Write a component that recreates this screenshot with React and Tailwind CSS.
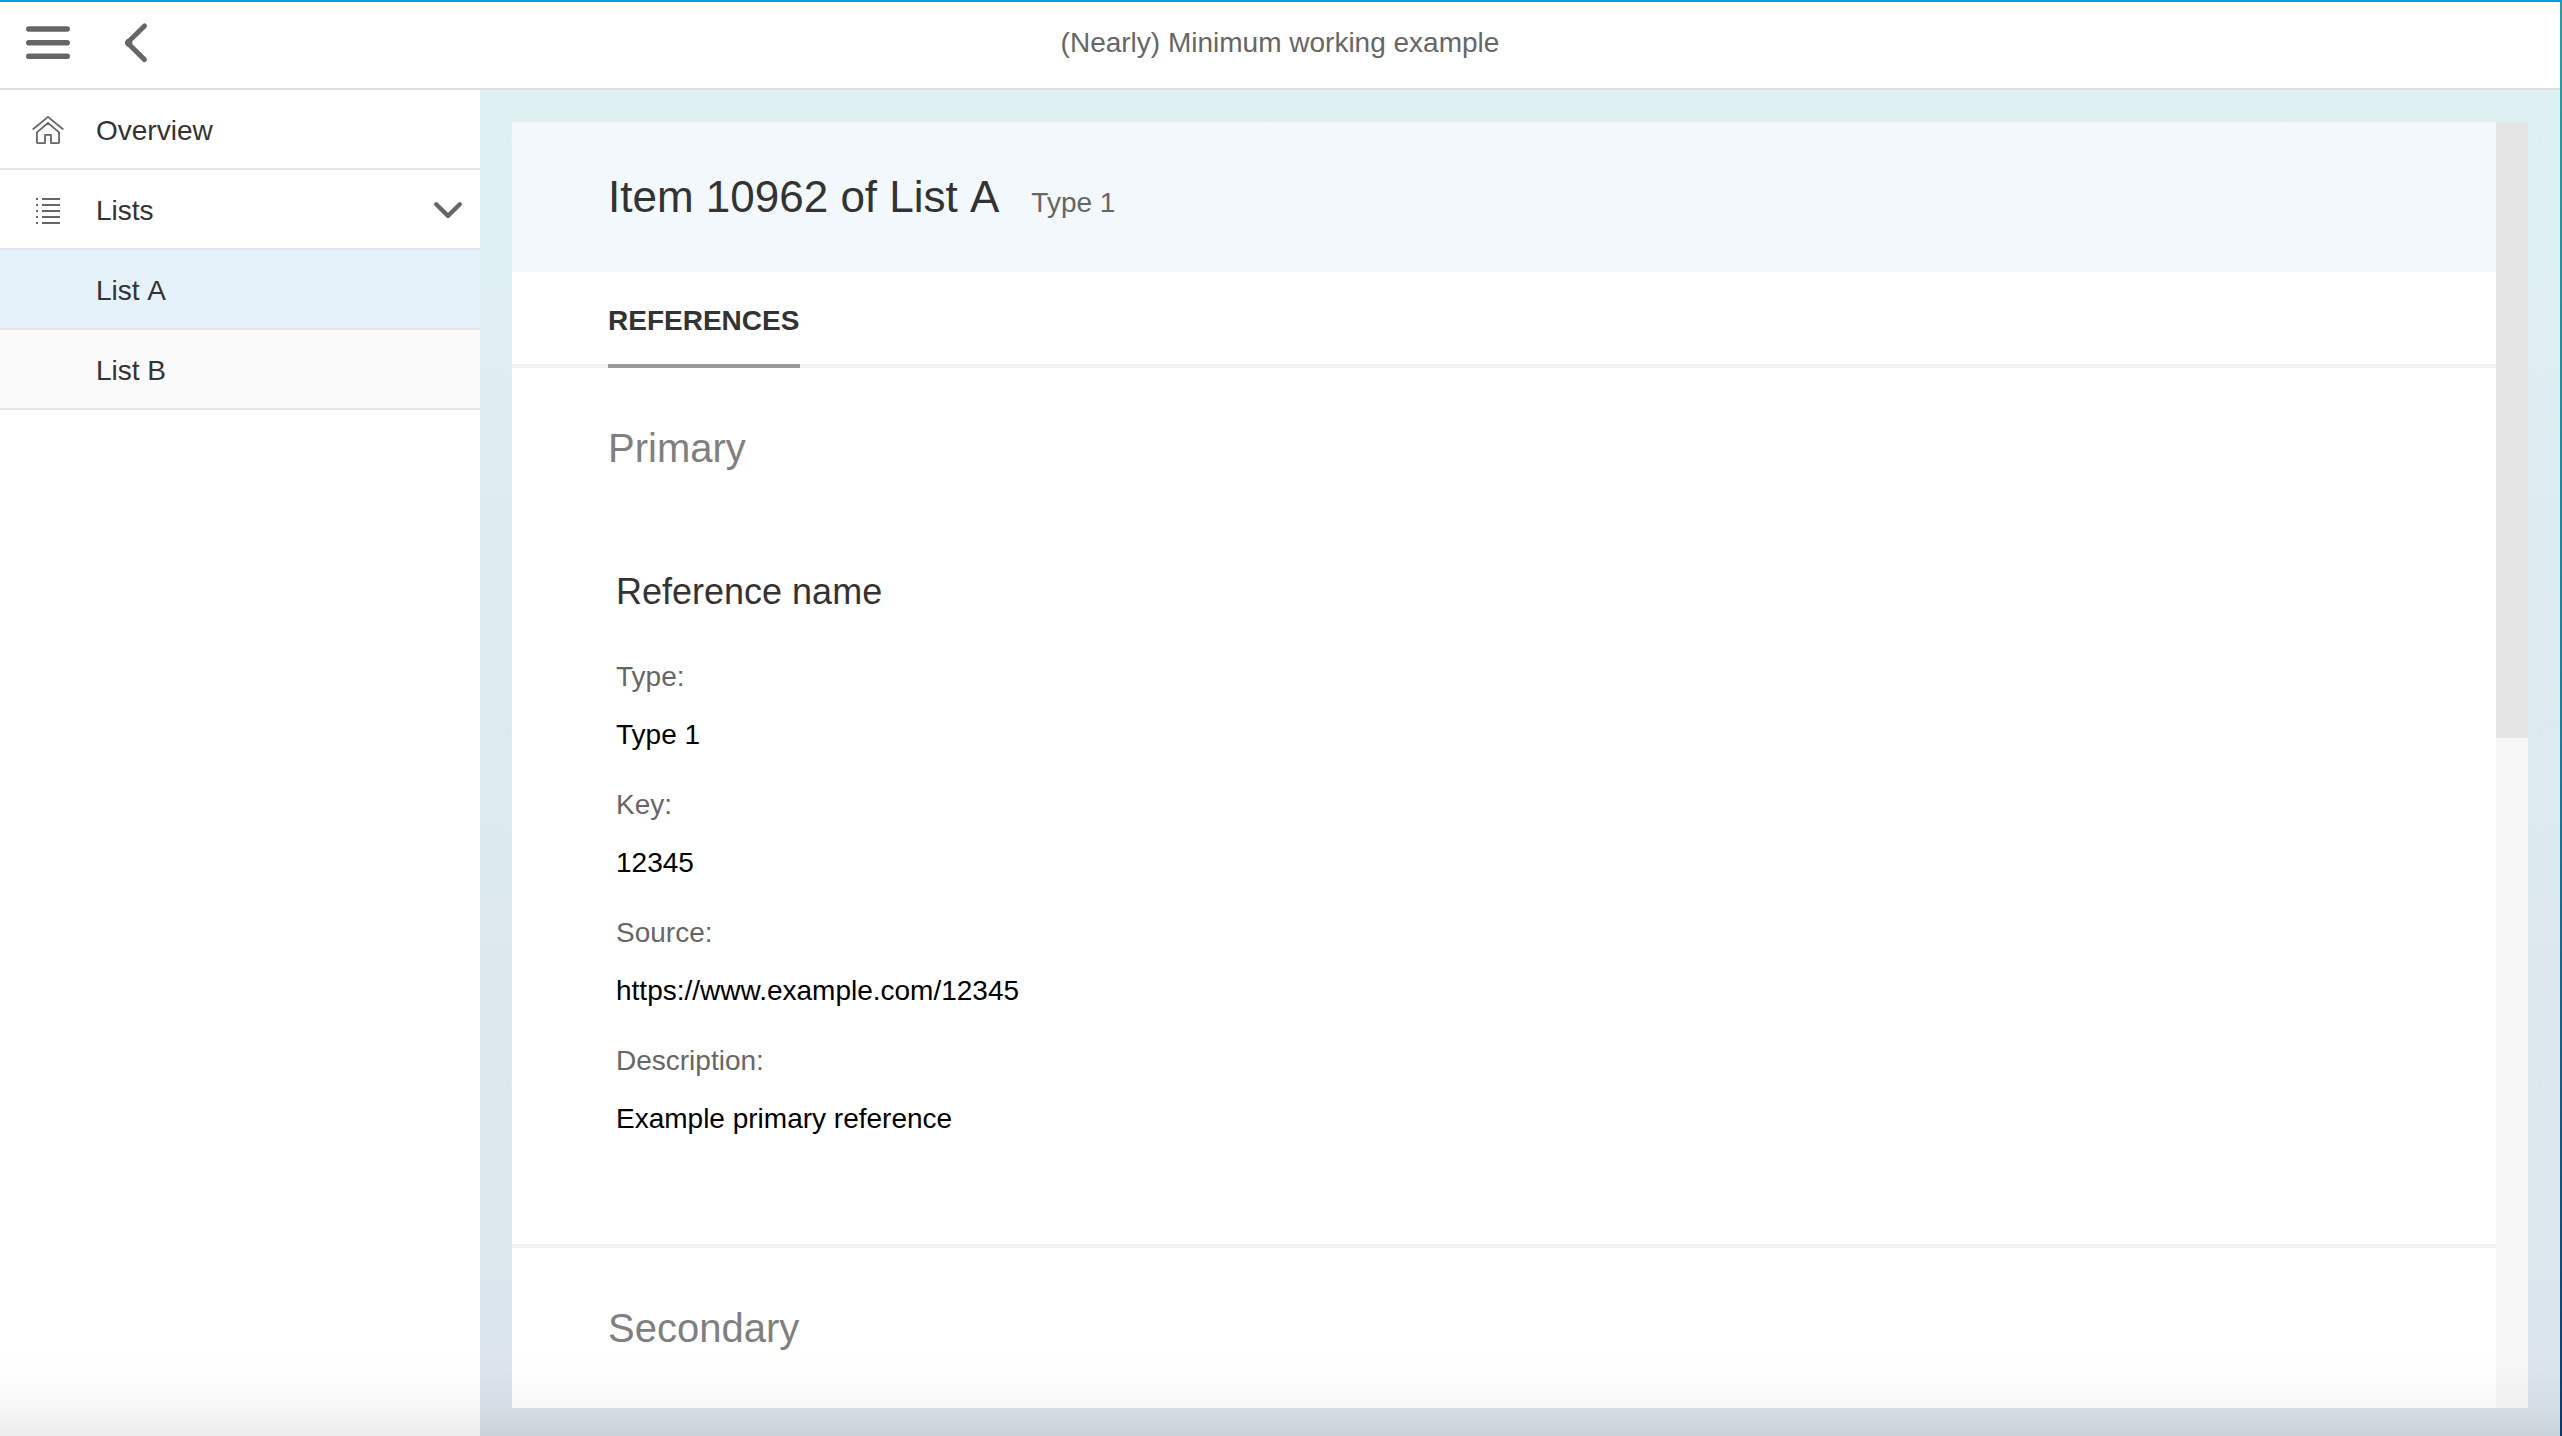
const fields = [
  ["Type:", "Type 1"],
  ["Key:", "12345"],
  ["Source:", "https://www.example.com/12345"],
  ["Description:", "Example primary reference"],
];

function MenuIcon() {
  return (
    <svg className="block" width="48" height="40" viewBox="0 0 48 40" fill="none" stroke="#666666" strokeWidth="5.6" strokeLinecap="round">
      <path d="M4.8 6H43.2M4.8 19.7H43.2M4.8 33.3H43.2" />
    </svg>
  );
}

function BackIcon() {
  return (
    <svg className="block" width="28" height="44" viewBox="0 0 28 44" fill="none" stroke="#666666" strokeWidth="5" strokeLinecap="round" strokeLinejoin="round">
      <path d="M22.5 5L5.4 21.8L22.5 38.6" />
      <path d="M7.8 21.8L6 20.6V23Z" />
    </svg>
  );
}

function HomeIcon() {
  return (
    <svg className="block" width="32" height="32" viewBox="0 0 32 32" fill="none" stroke="#666666" strokeWidth="1.8" strokeLinejoin="round">
      <path d="M0.7 15.5L16 2.9L31.3 15.5" />
      <path d="M4.9 18.4L16 9L27.1 18.4V28.2Q27.1 29.1 26.2 29.1H19V20.9H13V29.1H5.8Q4.9 29.1 4.9 28.2Z" />
    </svg>
  );
}

function ListIcon() {
  return (
    <svg className="block" width="32" height="32" viewBox="0 0 32 32" fill="none" stroke="#666666" strokeWidth="2">
      <path d="M4 5H6M4 11H6M4 17H6M4 23H6M4 29H6" />
      <path d="M10 5H28M10 11H28M10 17H28M10 23H28M10 29H28" />
    </svg>
  );
}

function ExpandIcon() {
  return (
    <svg className="block" width="32" height="24" viewBox="0 0 32 24" fill="none" stroke="#666666" strokeWidth="4.3" strokeLinecap="round" strokeLinejoin="round">
      <path d="M4.2 6.2L16 17.9L27.8 6.2" />
    </svg>
  );
}

function NavRow({ icon, label, trailing, tone = "bg-white" }) {
  return (
    <div className={`flex h-20 items-center border-b-2 border-[#e5e5e5] pl-8 pr-4 pt-0.5 ${tone}`}>
      <div className="w-16">{icon}</div>
      <span className="flex-1 pt-0.5 [font-kerning:none]">{label}</span>
      {trailing}
    </div>
  );
}

export default function App() {
  return (
    <div className="relative flex h-[1436px] w-[2562px] overflow-hidden font-['Liberation_Sans',Arial,sans-serif] text-[28px] leading-8 text-[#333333]">
      <div className="flex min-w-0 flex-1 flex-col">
        <header className="grid h-[90px] shrink-0 grid-cols-3 items-center border-b-2 border-t-2 border-b-[#dddddd] border-t-[#009de0] bg-white pb-1">
          <div className="flex items-center pl-6">
            <MenuIcon />
            <div className="pl-[50px]">
              <BackIcon />
            </div>
          </div>
          <h1 className="text-center text-[#666666]">(Nearly) Minimum working example</h1>
          <div />
        </header>

        <div className="flex min-h-0 flex-1">
          <nav className="w-[480px] shrink-0 bg-white">
            <NavRow icon={<HomeIcon />} label="Overview" />
            <NavRow icon={<ListIcon />} label="Lists" trailing={<ExpandIcon />} />
            <NavRow label="List A" tone="bg-[#e5f2fa]" />
            <NavRow label="List B" tone="bg-[#fafafa]" />
          </nav>

          <main className="flex min-w-0 flex-1 bg-linear-to-b from-[#def0f2] to-[#dbe4ec] px-8 pb-7 pt-8">
            <div className="min-w-0 flex-1 overflow-hidden bg-white">
              <div className="flex h-[150px] items-baseline gap-8 bg-[#f2f8fc] pl-24 pt-[50px]">
                <h2 className="text-[44px] leading-[50px] [font-kerning:none]">Item 10962 of List A</h2>
                <span className="text-[#666666]">Type 1</span>
              </div>
              <div className="h-24 border-b-4 border-[#f2f2f2] pl-24">
                <div className="h-24 w-48 border-b-4 border-[#999999] pt-[33px] font-bold">REFERENCES</div>
              </div>
              <section className="h-[880px] border-b-4 border-[#f2f2f2] pl-24 pt-14">
                <h3 className="text-[40px] leading-[48px] text-[#808080]">Primary</h3>
                <div className="pl-2 pt-24">
                  <h4 className="text-4xl leading-[48px]">Reference name</h4>
                  <dl className="pt-[45px]">
                    {fields.map(([label, value]) => (
                      <div key={label} className="h-32">
                        <dt className="h-[58px] text-[#666666]">{label}</dt>
                        <dd className="text-black">{value}</dd>
                      </div>
                    ))}
                  </dl>
                </div>
              </section>
              <section className="pl-24 pt-14">
                <h3 className="text-[40px] leading-[48px] text-[#808080]">Secondary</h3>
              </section>
            </div>
            <div className="w-8 shrink-0 bg-[#f7f7f7]">
              <div className="h-[616px] bg-[#e5e5e5]" />
            </div>
          </main>
        </div>
      </div>
      <div className="w-0.5 shrink-0 border-t-2 border-[#009de0] bg-linear-to-b from-[#2b9da1] via-[#19809a] to-[#0d3c70]" />
      <div className="pointer-events-none absolute inset-x-0 bottom-0 h-24 bg-[linear-gradient(to_bottom,rgba(0,0,0,0)_0%,rgba(0,0,0,0.005)_30%,rgba(0,0,0,0.03)_70%,rgba(0,0,0,0.08)_100%)]" />
    </div>
  );
}
